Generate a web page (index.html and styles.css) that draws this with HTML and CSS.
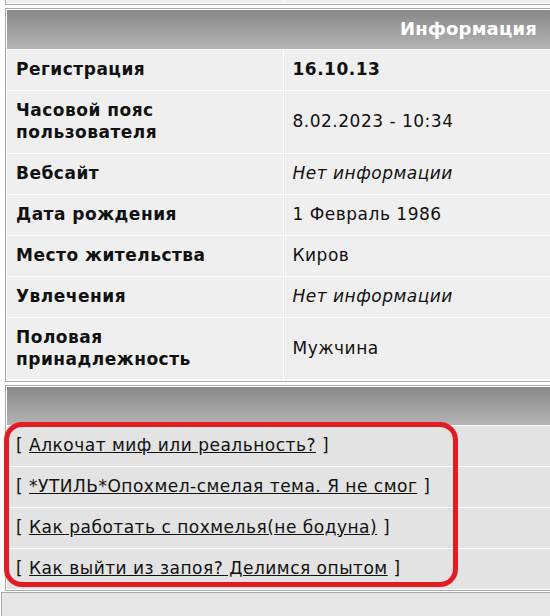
FILE: index.html
```html
<!DOCTYPE html>
<html lang="ru">
<head>
<meta charset="utf-8">
<title>Профиль</title>
<link rel="stylesheet" href="styles.css">
</head>
<body>
<div class="page">
  <div class="prev-table">
    <div class="prev-cell prev-left"></div>
    <div class="prev-cell prev-right"></div>
  </div>

  <table class="forum info">
    <tr><th colspan="2" class="head">Информация</th></tr>
    <tr><td class="label">Регистрация</td><td class="value strong">16.10.13</td></tr>
    <tr><td class="label">Часовой пояс<br>пользователя</td><td class="value">8.02.2023 - 10:34</td></tr>
    <tr><td class="label">Вебсайт</td><td class="value"><i>Нет информации</i></td></tr>
    <tr><td class="label">Дата рождения</td><td class="value">1 Февраль 1986</td></tr>
    <tr><td class="label">Место жительства</td><td class="value">Киров</td></tr>
    <tr><td class="label">Увлечения</td><td class="value"><i>Нет информации</i></td></tr>
    <tr><td class="label">Половая<br>принадлежность</td><td class="value">Мужчина</td></tr>
  </table>

  <table class="forum topics">
    <tr><th class="head head-empty"></th></tr>
    <tr><td class="topic">[ <a href="#">Алкочат миф или реальность?</a> ]</td></tr>
    <tr><td class="topic">[ <a href="#">*УТИЛЬ*Опохмел-смелая тема. Я не смог</a> ]</td></tr>
    <tr><td class="topic">[ <a href="#">Как работать с похмелья(не бодуна)</a> ]</td></tr>
    <tr><td class="topic">[ <a href="#">Как выйти из запоя? Делимся опытом</a> ]</td></tr>
  </table>

  <div class="next-table"></div>

  <div class="highlight"></div>
</div>
</body>
</html>
```

FILE: styles.css
```css
html, body {
  margin: 0;
  padding: 0;
  overflow: hidden;
  background: #ffffff;
}

body {
  font-family: "DejaVu Sans", Verdana, sans-serif;
  font-size: 17px;
  letter-spacing: 0.5px;
  color: #111111;
}

.page {
  position: relative;
  width: 570px;
  height: 616px;
}

.prev-table {
  display: flex;
  margin-left: 5px;
  width: 556px;
  height: 3px;
  border: 1px solid #a8a8a8;
  border-top: none;
  background: #ffffff;
  gap: 1px;
  padding: 0 1px 1px 1px;
  box-sizing: content-box;
}

.prev-cell {
  background: #efefef;
  height: 3px;
}

.prev-left { width: 277px; }
.prev-right { flex: 1; }

.forum {
  margin-left: 5px;
  width: 556px;
  border: 1px solid #a8a8a8;
  border-spacing: 1px;
  background: #ffffff;
  table-layout: fixed;
}

.info {
  margin-top: 3px;
}

.topics {
  margin-top: 3px;
}

.head {
  height: 39px;
  padding: 0 22px 2px 9px;
  text-align: right;
  font-size: 18px;
  letter-spacing: 0.2px;
  font-weight: bold;
  color: #ffffff;
  background: linear-gradient(to bottom, #888888, #b4b4b4);
  box-sizing: border-box;
}

.topics .head {
  height: 38px;
}

.info td {
  background: #efefef;
  height: 40px;
  padding: 8px 9px 10px 9px;
  line-height: 22px;
  vertical-align: middle;
  box-sizing: border-box;
}

.label {
  width: 277px;
  font-weight: bold;
}

.value.strong {
  font-weight: bold;
}

.topics td {
  background: #e3e3e3;
  height: 40px;
  padding: 0 9px 3px 9px;
  line-height: 22px;
  box-sizing: border-box;
}

.topic a {
  color: #111111;
  text-decoration: underline;
}

.next-table {
  margin-top: 1px;
  margin-left: 1px;
  width: 560px;
  height: 40px;
  border: 1px solid #a8a8a8;
  background: #e6e6e6;
}

.highlight {
  position: absolute;
  left: 4px;
  top: 422px;
  width: 454px;
  height: 165px;
  border: 5px solid #e31b23;
  border-radius: 18px;
  box-sizing: border-box;
}
```
